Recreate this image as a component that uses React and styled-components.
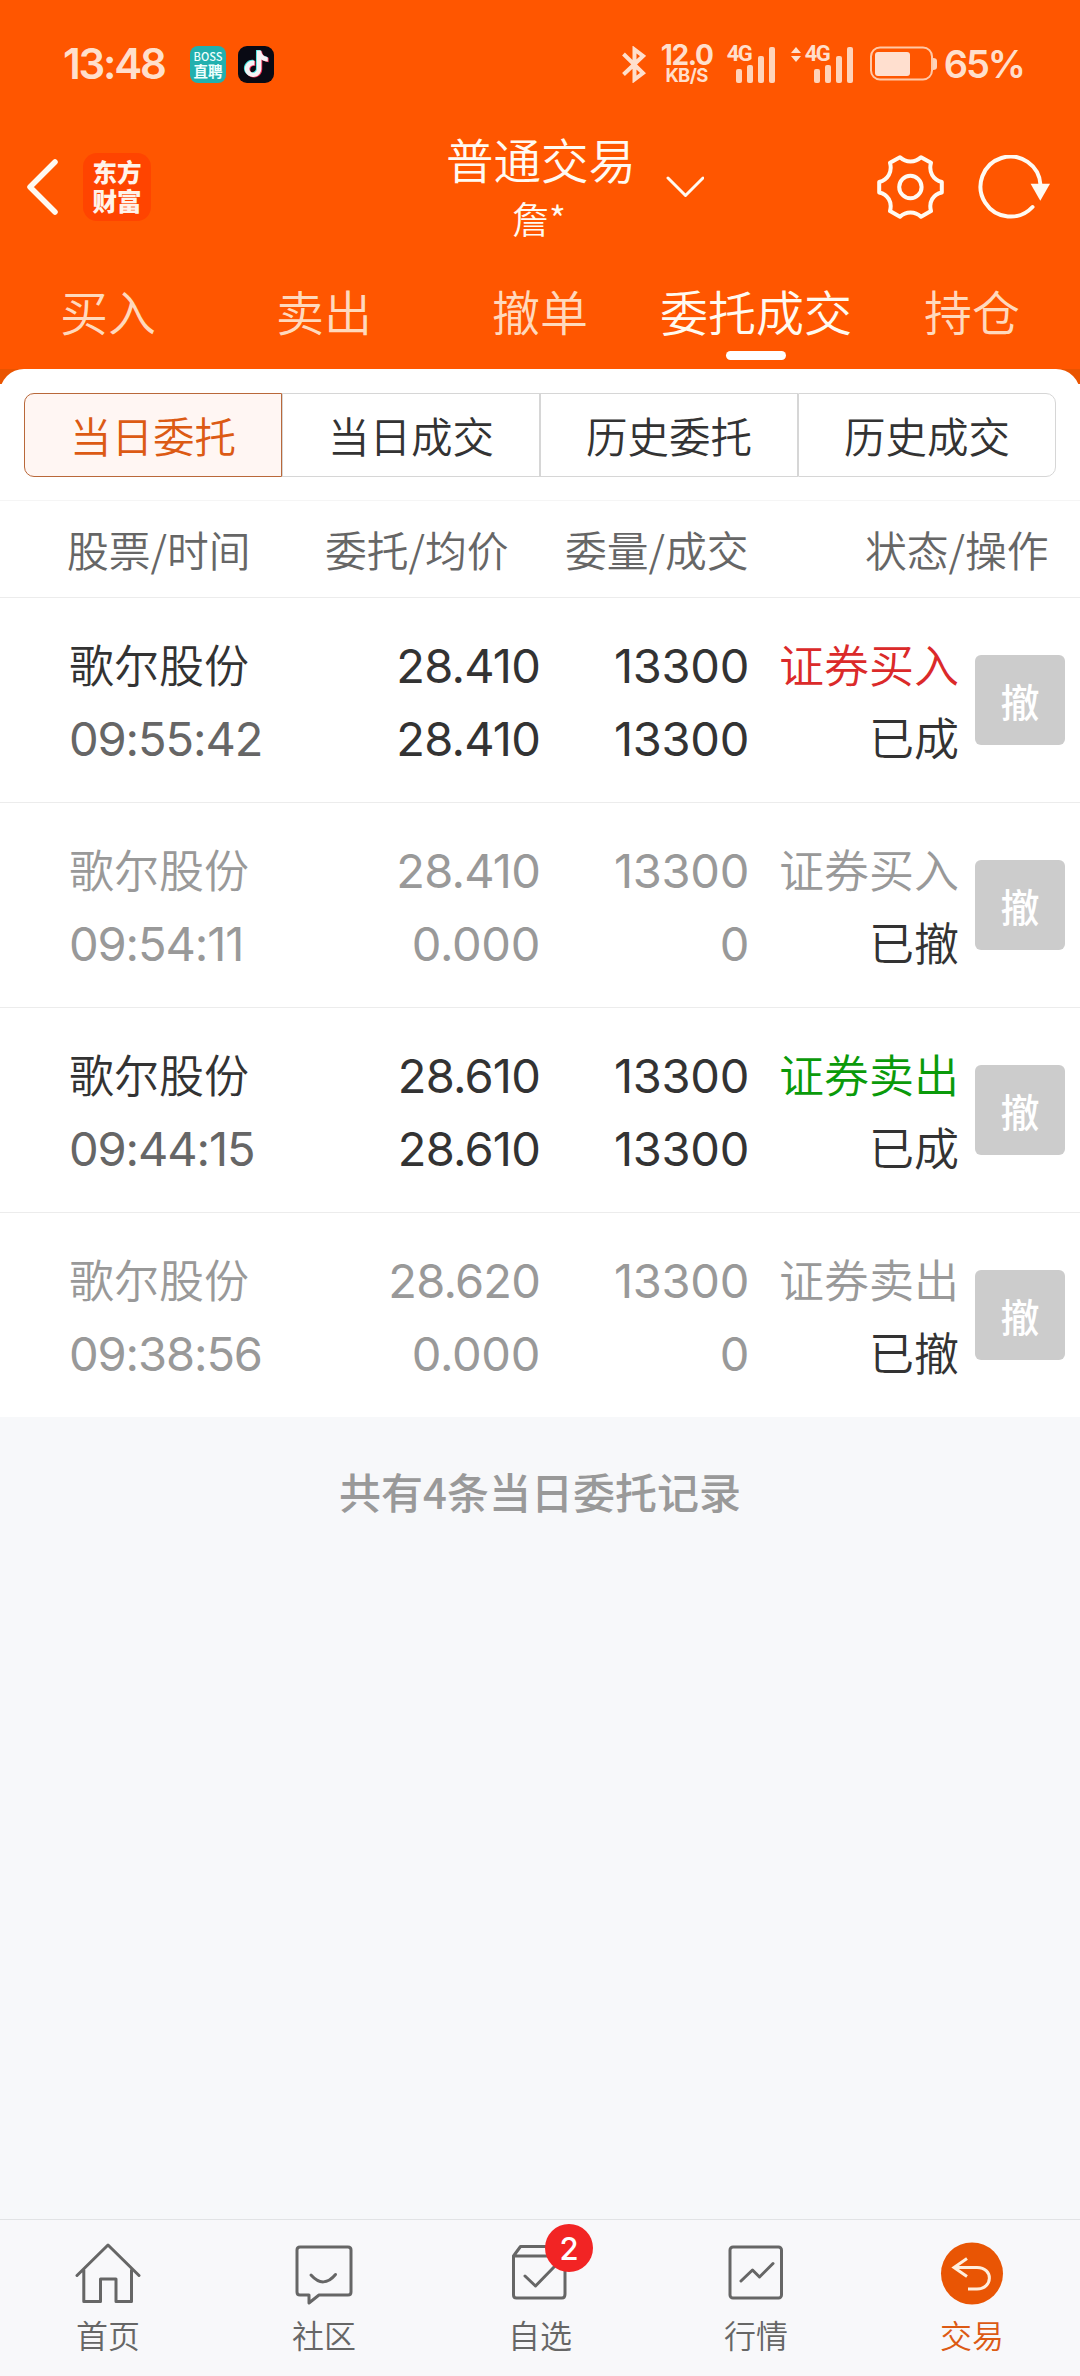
import React, { useState } from 'react'
import styled, { createGlobalStyle } from 'styled-components'

const GlobalStyle = createGlobalStyle`
  * {
    box-sizing: border-box;
  }

  body {
    margin: 0;
    background: #f7f8fa;
    font-family: 'Noto Sans CJK SC', sans-serif;
    font-weight: 350;
    color: #333;
  }

  button {
    margin: 0;
    padding: 0;
    border: none;
    background: none;
    font: inherit;
    color: inherit;
  }
`

const Page = styled.div`
  width: 1080px;
  height: 2376px;
  display: flex;
  flex-direction: column;
  overflow: hidden;
`

const Top = styled.header`
  height: 369px;
  background: #ff5600;
  display: flex;
  flex-direction: column;
`

/* ---------- status bar ---------- */

const StatusBar = styled.div`
  height: 128px;
  padding: 0 56px 0 63px;
  display: flex;
  justify-content: space-between;
  align-items: center;
  color: #ffdfcc;
  font-family: Inter, sans-serif;
  font-weight: 600;
`

const StatusGroup = styled.div`
  display: flex;
  align-items: center;
`

const Clock = styled.span`
  width: 127px;
  font-size: 42px;
  line-height: 42px;
  letter-spacing: -2.2px;
`

const BossIcon = styled.div`
  width: 36px;
  height: 37px;
  margin-right: 12px;
  border-radius: 8px;
  background: #22b0ae;
  color: #effffd;
  display: flex;
  flex-direction: column;
  align-items: center;
  justify-content: center;
  font: 500 11px/13px 'Noto Sans CJK SC', sans-serif;

  b {
    font-size: 14.5px;
    line-height: 16px;
    font-weight: 700;
  }
`

const Speed = styled.div`
  width: 56px;
  margin: 0 12px 0 13px;
  display: flex;
  flex-direction: column;
  align-items: center;
  font-size: 28px;
  font-weight: 700;
  line-height: 22px;
  letter-spacing: -1.4px;

  small {
    font-size: 18.5px;
    line-height: 18px;
    letter-spacing: -0.6px;
  }
`

const SignalBox = styled.div`
  display: flex;
  height: 37px;
  margin-right: ${p => p.$gap}px;
`

const NetType = styled.span`
  width: 9px;
  white-space: nowrap;
  font: 700 22px/16px 'Roboto', sans-serif;
  letter-spacing: -1.6px;
`

const Bars = styled.div`
  display: flex;
  align-items: flex-end;
  gap: 5px;
`

const Bar = styled.i`
  width: 6px;
  height: ${p => p.$h}px;
  border-radius: 2px;
  background: #ffd3ba;
`

const Percent = styled.span`
  margin-left: 6px;
  font-size: 38px;
  line-height: 40px;
  letter-spacing: -2px;
`

/* ---------- title bar ---------- */

const TitleBar = styled.div`
  height: 118px;
  padding: 0 28px 0 26px;
  display: grid;
  grid-template-columns: 420px 186px 1fr auto;
  align-items: center;
  color: #fffaf2;
`

const Brand = styled.div`
  display: flex;
  align-items: center;
  gap: 25px;
`

const BrandLogo = styled.div`
  width: 68px;
  height: 68px;
  border-radius: 14px;
  background: #ff4400;
  color: #fff3ea;
  display: flex;
  flex-direction: column;
  align-items: center;
  justify-content: center;
  font-size: 24.5px;
  line-height: 29px;
  font-weight: 900;
  padding-bottom: 3px;
`

const Title = styled.div`
  text-align: center;
  font-size: 47.5px;
  line-height: 62px;
  white-space: nowrap;

  small {
    display: block;
    font-size: 37px;
    line-height: 56px;
  }
`

const Expand = styled.button`
  display: flex;
  padding-left: 34px;
`

const Actions = styled.div`
  display: flex;
  gap: 34px;
`

/* ---------- tabs ---------- */

const Tabs = styled.nav`
  height: 123px;
  display: grid;
  grid-template-columns: repeat(5, 216px);
`

const Tab = styled.button`
  display: flex;
  flex-direction: column;
  align-items: center;
  padding-top: 31px;
  font-size: 48px;
  line-height: 66px;
  white-space: nowrap;
  color: ${p => (p.$active ? '#fffaf0' : '#ffd9bd')};

  &::after {
    content: '';
    width: 60px;
    height: 9px;
    margin-top: 8px;
    border-radius: 5px;
    background: ${p => (p.$active ? '#fff' : 'transparent')};
  }
`

/* ---------- order list ---------- */

const PanelTop = styled.div`
  background: linear-gradient(#ea5400 15px, #fff 15px);
`

const Segments = styled.div`
  height: 132px;
  padding: 24px 24px 23px;
  background: #fff;
  border-radius: 24px 24px 0 0;
  border-bottom: 1px solid #f5f5f5;
  display: flex;
`

const Segment = styled.button`
  flex: 1;
  border: 1px solid ${p => (p.$active ? '#b9683a' : '#d6d6d6')};
  background: ${p => (p.$active ? '#fff6f3' : '#fff')};
  color: ${p => (p.$active ? '#dc5a14' : '#333')};
  font-size: 41.5px;
  line-height: 60px;

  &:first-child {
    border-radius: 10px 0 0 10px;
  }

  &:last-child {
    border-radius: 0 10px 10px 0;
  }
`

const HeadRow = styled.div`
  height: 97px;
  padding-left: 67px;
  background: #fff;
  border-bottom: 1px solid #ececec;
  display: grid;
  grid-template-columns: 258px 240px 300px 1fr;
  align-items: center;
  font-size: 41.8px;
  line-height: 60px;
  color: #666;
  white-space: nowrap;
`

const Row = styled.div`
  height: 205px;
  padding: 29px 15px 0 69px;
  background: #fff;
  border-bottom: 1px solid #ececec;
  display: grid;
  grid-template-columns: 231px 240px 209px 210px 90px;
  color: ${p => (p.$dim ? '#999' : '#333')};

  &:last-child {
    height: 204px;
    border-bottom: none;
  }
`

const Cell = styled.div`
  display: flex;
  flex-direction: column;
  align-items: ${p => (p.$left ? 'flex-start' : 'flex-end')};
  white-space: nowrap;
`

const Text = styled.span`
  height: 73px;
  font-size: 45px;
  line-height: 73px;
  color: ${p => p.$color || 'inherit'};
`

const Num = styled.span`
  height: 73px;
  font: 380 47px/77px Inter, sans-serif;
  letter-spacing: ${p => p.$spacing ?? -0.8}px;
  color: ${p => p.$color || 'inherit'};
`

const Cancel = styled.button`
  width: 90px;
  height: 90px;
  margin: 28px 0 0 16px;
  border-radius: 6px;
  background: #ccc;
  color: #fff;
  font-size: 39px;
  line-height: 88px;
  font-weight: 500;
`

const Summary = styled.p`
  flex: 1;
  margin: 0;
  padding-top: 44px;
  text-align: center;
  font-size: 42px;
  line-height: 60px;
  font-weight: 500;
  color: #999;
`

/* ---------- bottom navigation ---------- */

const BottomNav = styled.nav`
  height: 157px;
  border-top: 1px solid #e2e3e5;
  background: #f8f8fa;
  display: grid;
  grid-template-columns: repeat(5, 216px);
`

const NavItem = styled.button`
  display: flex;
  flex-direction: column;
  align-items: center;
  padding-top: 21px;
  font-size: 32px;
  line-height: 44px;
  color: ${p => (p.$active ? '#dc5a14' : '#666')};

  svg {
    display: block;
    margin-bottom: 5px;
  }
`

const IconBox = styled.div`
  position: relative;
`

const Badge = styled.span`
  position: absolute;
  top: -17px;
  left: 39px;
  width: 48px;
  height: 48px;
  border-radius: 50%;
  background: #f22424;
  color: #fff;
  font: 500 31px/49px Inter, sans-serif;
  text-align: center;
`

const Line = ({ children, w = 68, h = 66, sw = 3, ...rest }) => (
  <svg width={w} height={h} viewBox={`0 0 ${w} ${h}`} fill='none' stroke='currentColor' strokeWidth={sw} strokeLinecap='round' strokeLinejoin='round' {...rest}>
    {children}
  </svg>
)

const note = 'M12.525.02c1.31-.02 2.61-.01 3.91-.02.08 1.53.63 3.09 1.75 4.17 1.12 1.11 2.7 1.62 4.24 1.79v4.03c-1.44-.05-2.89-.35-4.2-.97-.57-.26-1.1-.59-1.62-.93-.01 2.92.01 5.84-.02 8.75-.08 1.4-.54 2.79-1.35 3.94-1.31 1.92-3.58 3.17-5.91 3.21-1.43.08-2.86-.31-4.08-1.03-2.02-1.19-3.44-3.37-3.65-5.71-.02-.5-.03-1-.01-1.49.18-1.9 1.12-3.72 2.58-4.96 1.66-1.44 3.98-2.13 6.15-1.72.02 1.48-.04 2.96-.04 4.44-.99-.32-2.15-.23-3.02.37-.63.41-1.11 1.04-1.36 1.75-.21.51-.15 1.07-.14 1.61.24 1.64 1.82 3.02 3.5 2.87 1.12-.01 2.19-.66 2.77-1.61.19-.33.4-.67.41-1.06.1-1.79.06-3.57.07-5.36.01-4.03-.01-8.05.02-12.07z'

const DouyinIcon = () => (
  <svg width='36' height='37' viewBox='0 0 36 37'>
    <rect width='36' height='37' rx='9' fill='#090a14' />
    <path d={note} fill='#3fe3e0' transform='translate(4.2 4) scale(1.1)' />
    <path d={note} fill='#f5325b' transform='translate(6 5.2) scale(1.1)' />
    <path d={note} fill='#f4f4f6' transform='translate(5.1 4.6) scale(1.1)' />
  </svg>
)

const Bluetooth = () => (
  <Line w={24} h={37} sw={4} strokeLinecap='butt' strokeLinejoin='miter'>
    <path d='M1.5 8 L21 27 L12.5 33.5 V3.5 L21 10 L1.5 28.5' />
  </Line>
)

const Signal = ({ arrows, gap }) => (
  <SignalBox $gap={gap}>
    {arrows && (
      <svg width='14' height='17' viewBox='0 0 14 17' fill='#ffdfcc'>
        <path d='M0 7 L5 1 L10 7Z M0 10 L5 16 L10 10Z' />
      </svg>
    )}
    <NetType>4G</NetType>
    <Bars>
      {[14, 18, 27, 36].map(h => <Bar key={h} $h={h} />)}
    </Bars>
  </SignalBox>
)

const Battery = () => (
  <svg width='68' height='36' viewBox='0 0 68 36'>
    <rect x='1' y='1.5' width='61' height='32' rx='9' fill='none' stroke='#ffc9a8' strokeWidth='2' />
    <rect x='5' y='6' width='35' height='24' rx='3' fill='#ffdfcf' />
    <path d='M63 12 Q67 12 67 15 V21 Q67 24 63 24Z' fill='#ffd3ba' />
  </svg>
)

const Gear = () => (
  <Line w={67} h={64} sw={4}>
    <path d='M2.2 27 V37.5 C11 39.5 15.5 47 13 56 L23 61.8 C29 56.2 38 56.2 44 61.8 L54 56 C51.5 47 56 39.5 64.8 37.5 V27 C56 24.5 51.5 17 54 7.8 L44 2.2 C38 7.8 29 7.8 23 2.2 L13 7.8 C15.5 17 11 24.5 2.2 27Z' />
    <circle cx='33.4' cy='32' r='11.2' />
  </Line>
)

const Refresh = () => (
  <Line w={74} h={64} sw={4}>
    <path d='M62.5 30 A30 30 0 1 0 54.5 52' />
    <path d='M52.6 28.8 H72 L62.3 45.8Z' fill='currentColor' stroke='none' />
  </Line>
)

const HomeIcon = () => (
  <Line>
    <path d='M3 34.5 L34 4 L65 34.5 M9.8 29 V60.5 H26.5 V38 H42 V60.5 H57.5 V29' />
  </Line>
)

const CommunityIcon = () => (
  <Line>
    <path d='M10 6 H58 Q61 6 61 9 V51 Q61 54 58 54 H29 L19 62 V54 H10 Q7 54 7 51 V9 Q7 6 10 6Z' />
    <path d='M21 34 Q33.5 48 45.5 33.5' />
  </Line>
)

const WatchIcon = () => (
  <Line>
    <path d='M7.5 15 L14.5 5.5 H59 V53 Q59 57 56 57 H10.5 Q7.5 57 7.5 54 V15 H59' />
    <path d='M19 35 L29.5 45 L49 25' />
  </Line>
)

const MarketIcon = () => (
  <Line>
    <rect x='8' y='6' width='51.5' height='51' rx='3' />
    <path d='M19 40 L30.5 29 L37.5 36 L51 22.5' />
  </Line>
)

const TradeIcon = () => (
  <Line>
    <circle cx='34' cy='32.5' r='31' fill='#e95504' stroke='none' />
    <g stroke='#ffeedd'>
      <path d='M29 17.5 L16 26.5 L29 35.5 M17 26.5 H39 C56 26.5 55 48 39 48 H30' strokeLinecap='butt' strokeLinejoin='miter' />
    </g>
  </Line>
)

const tabs = ['买入', '卖出', '撤单', '委托成交', '持仓']
const segments = ['当日委托', '当日成交', '历史委托', '历史成交']
const heads = ['股票/时间', '委托/均价', '委量/成交', '状态/操作']

const orders = [
  { time: '09:55:42', price: '28.410', avg: '28.410', amount: '13300', deal: '13300', type: '证券买入', color: '#db2a2a', state: '已成' },
  { time: '09:54:11', price: '28.410', avg: '0.000', amount: '13300', deal: '0', type: '证券买入', state: '已撤', dim: true },
  { time: '09:44:15', price: '28.610', avg: '28.610', amount: '13300', deal: '13300', type: '证券卖出', color: '#0a9a0a', state: '已成' },
  { time: '09:38:56', price: '28.620', avg: '0.000', amount: '13300', deal: '0', type: '证券卖出', state: '已撤', dim: true },
]

const navItems = [
  { label: '首页', icon: <HomeIcon /> },
  { label: '社区', icon: <CommunityIcon /> },
  { label: '自选', icon: <WatchIcon />, badge: 2 },
  { label: '行情', icon: <MarketIcon /> },
  { label: '交易', icon: <TradeIcon /> },
]

const App = () => {
  const [tab, setTab] = useState(3)
  const [segment, setSegment] = useState(0)

  return (
    <Page>
      <GlobalStyle />
      <Top>
        <StatusBar>
          <StatusGroup>
            <Clock>13:48</Clock>
            <BossIcon>BOSS<b>直聘</b></BossIcon>
            <DouyinIcon />
          </StatusGroup>
          <StatusGroup>
            <Bluetooth />
            <Speed><span>12.0</span><small>KB/S</small></Speed>
            <Signal gap={16} />
            <Signal arrows gap={17} />
            <Battery />
            <Percent>65%</Percent>
          </StatusGroup>
        </StatusBar>

        <TitleBar>
          <Brand>
            <Line w={32} h={56} sw={5.5}><path d='M29 3 L4 28 L29 53' /></Line>
            <BrandLogo><span>东方</span><span>财富</span></BrandLogo>
          </Brand>
          <Title>普通交易<small>詹*</small></Title>
          <Expand>
            <Line w={38} h={22} sw={3}><path d='M2 2 L19.5 19.5 L37 2' /></Line>
          </Expand>
          <Actions>
            <Gear />
            <Refresh />
          </Actions>
        </TitleBar>

        <Tabs>
          {tabs.map((t, i) => (
            <Tab key={t} $active={i === tab} onClick={() => setTab(i)}>{t}</Tab>
          ))}
        </Tabs>
      </Top>

      <PanelTop>
        <Segments>
          {segments.map((s, i) => (
            <Segment key={s} $active={i === segment} onClick={() => setSegment(i)}>{s}</Segment>
          ))}
        </Segments>
      </PanelTop>

      <HeadRow>
        {heads.map(h => <span key={h}>{h}</span>)}
      </HeadRow>

      <div>
        {orders.map(o => (
          <Row key={o.time} $dim={o.dim}>
            <Cell $left>
              <Text>歌尔股份</Text>
              <Num $spacing={-1.1} $color={o.dim ? '#999' : '#666'}>{o.time}</Num>
            </Cell>
            <Cell>
              <Num>{o.price}</Num>
              <Num $spacing={o.dim ? -0.3 : -0.8}>{o.avg}</Num>
            </Cell>
            <Cell>
              <Num $spacing={-0.3}>{o.amount}</Num>
              <Num $spacing={-0.3}>{o.deal}</Num>
            </Cell>
            <Cell>
              <Text $color={o.color}>{o.type}</Text>
              <Text $color='#333'>{o.state}</Text>
            </Cell>
            <Cancel>撤</Cancel>
          </Row>
        ))}
      </div>

      <Summary>共有4条当日委托记录</Summary>

      <BottomNav>
        {navItems.map((n, i) => (
          <NavItem key={n.label} $active={i === 4}>
            <IconBox>
              {n.icon}
              {n.badge && <Badge>{n.badge}</Badge>}
            </IconBox>
            {n.label}
          </NavItem>
        ))}
      </BottomNav>
    </Page>
  )
}

export default App
